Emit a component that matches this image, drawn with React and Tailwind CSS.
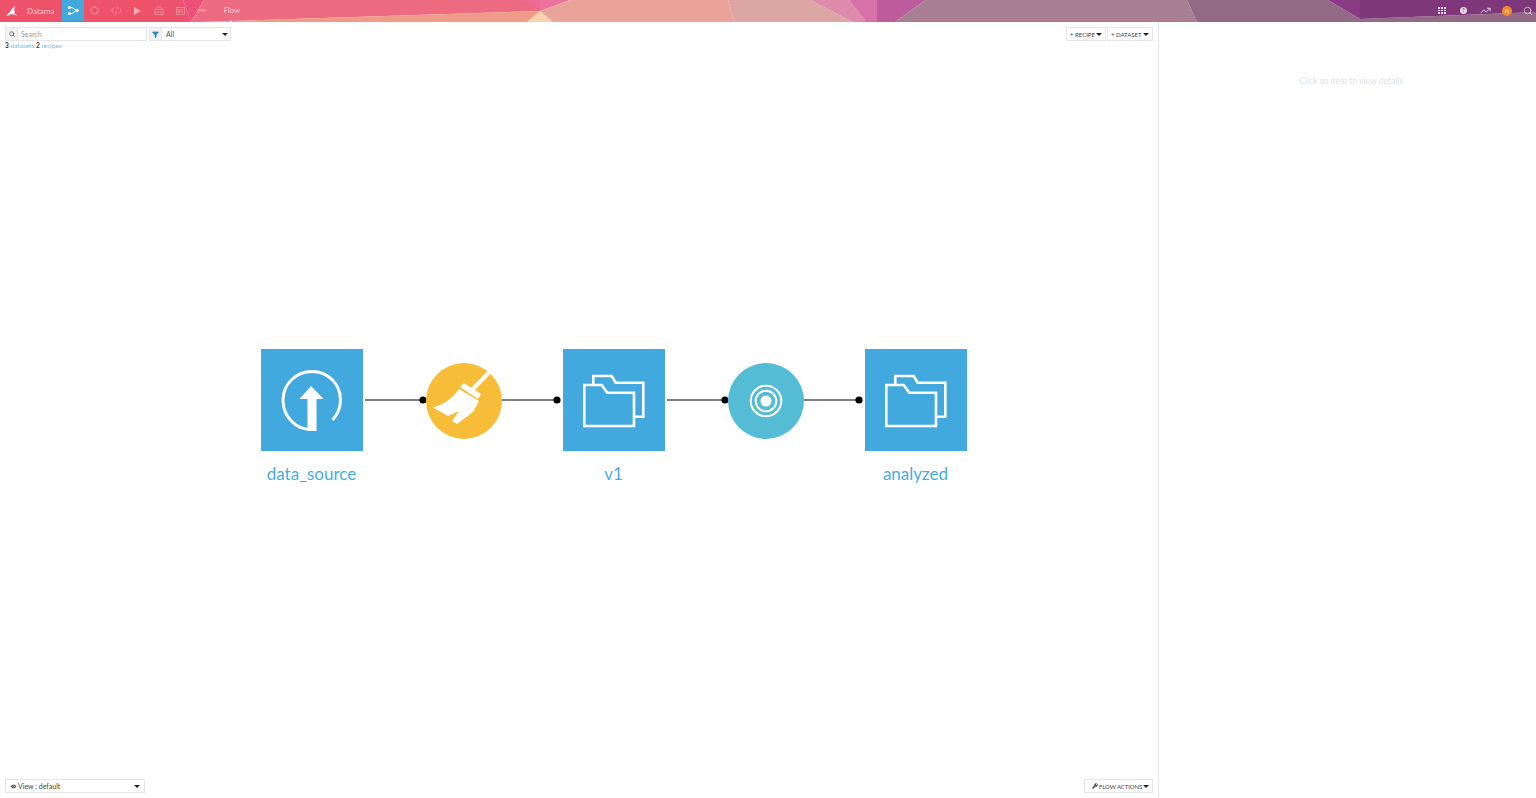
import React from "react";
import { Eye, Filter, Search, TrendingUp, Wrench } from "lucide-react";

const banner = [
  ["#ee516a", "0,0 183,0 191,22 0,22"],
  ["#ee4f78", "183,0 204,0 191,22"],
  ["#ed6b80", "204,0 540,0 540,11 200,22 191,22"],
  ["#f09b88", "200,22 540,11 527,22"],
  ["#ec6a94", "517,0 540,0 540,8"],
  ["#ec719c", "540,0 570,0 540,11"],
  ["#f8d3b0", "527,22 540,11 553,22"],
  ["#e9a398", "570,0 728,0 735,22 553,22 540,11"],
  ["#daa5a2", "728,0 810,0 853,22 735,22"],
  ["#de8bab", "810,0 849,0 866,22 853,22"],
  ["#d672a8", "849,0 877,0 877,22 866,22"],
  ["#bc5c9c", "877,0 926,0 895,22 877,22"],
  ["#a87e92", "926,0 1187,0 1197,22 895,22"],
  ["#926a85", "1187,0 1328,0 1360,19 1536,12 1536,22 1197,22"],
  ["#8a3a82", "1328,0 1360,0 1360,19"],
  ["#7e3778", "1360,0 1536,0 1536,12 1360,19"],
];

function Caret() {
  return <span className="inline-block shrink-0 border-x-[3px] border-t-[3px] border-x-transparent border-t-[#222]" />;
}

function FlowGlyph() {
  return (
    <svg width="11" height="9" viewBox="0 0 11 9">
      <path d="M2 1.5H4L8 4.5L4 7.5H2" fill="none" stroke="white" strokeWidth="1" />
      <circle cx="1.5" cy="1.5" r="1.5" fill="white" />
      <circle cx="1.5" cy="7.5" r="1.5" fill="white" />
      <circle cx="9" cy="4.5" r="1.8" fill="white" />
    </svg>
  );
}

function HeaderIcon({ children }) {
  return <div className="flex h-full w-[21.4px] items-center justify-center opacity-35">{children}</div>;
}

function Folder() {
  return (
    <svg width="102" height="102" viewBox="0 0 102 102" fill="none" stroke="white" strokeWidth="2.6">
      <path d="M21.3 36H38.7L44.3 43.7H71V77H21.3Z" />
      <path d="M30.3 35V27H48.7L52.7 33.7H80.3V67.7H71" />
    </svg>
  );
}

function Upload() {
  return (
    <svg width="102" height="102" viewBox="0 0 102 102" fill="none">
      <path d="M50 80.4C34 80.4 22 67 22 51C22 35 35 22.5 51 22.5C67 22.5 79.5 35 79.5 51C79.5 60 76 66 71.5 71" stroke="white" strokeWidth="3" />
      <path d="M50 37L62.5 50H55.5V82H46.5V50H38.5Z" fill="white" />
    </svg>
  );
}

function Broom() {
  return (
    <svg width="76" height="76" viewBox="0 0 76 76" fill="none">
      <path d="M63 9.5L46 27" stroke="white" strokeWidth="4" />
      <path d="M34 24L38 20L55 31L52 36Z" fill="white" />
      <path d="M33 26L53 38L47 49L31 61L26 58L33 48L22 53L7 44.5C17 42 27 35 33 26Z" fill="white" />
    </svg>
  );
}

function Target() {
  return (
    <svg width="76" height="76" viewBox="0 0 76 76" fill="none" stroke="white" strokeWidth="2">
      <circle cx="38" cy="38" r="15.3" />
      <circle cx="38" cy="38" r="10.3" />
      <circle cx="38" cy="38" r="5.5" fill="white" stroke="none" />
    </svg>
  );
}

const datasets = [
  { left: 260.5, name: "data_source", icon: <Upload /> },
  { left: 562.5, name: "v1", icon: <Folder /> },
  { left: 864.5, name: "analyzed", icon: <Folder /> },
];

function FlowGraph() {
  return (
    <div className="absolute inset-0">
      <svg className="absolute inset-0" width="1158" height="776" viewBox="0 0 1158 776">
        {[[365, 423], [502, 557], [667, 725], [804, 859]].map(([a, b]) => (
          <g key={a}>
            <line x1={a} x2={b} y1="378" y2="378" stroke="#555" strokeWidth="1.6" />
            <circle cx={b} cy="378" r="3.6" fill="black" />
          </g>
        ))}
      </svg>
      {datasets.map((d) => (
        <div key={d.name} className="absolute top-[327px] flex w-[102px] flex-col items-center" style={{ left: d.left }}>
          <div className="h-[102px] w-[102px] bg-[#42a9df]">{d.icon}</div>
          <div className="mt-[12px] whitespace-nowrap text-[17px] leading-[22px] text-[#48ade2]">{d.name}</div>
        </div>
      ))}
      <div className="absolute left-[426px] top-[341px] h-[76px] w-[76px] rounded-full bg-[#f7bc38]"><Broom /></div>
      <div className="absolute left-[728px] top-[341px] h-[76px] w-[76px] rounded-full bg-[#55bcd6]"><Target /></div>
    </div>
  );
}

function Button({ children, className }) {
  return (
    <div className={`flex h-[14px] items-center justify-between whitespace-nowrap border border-[#e6e6e6] bg-white px-[3px] text-[6px] text-[#444] ${className}`}>
      {children}
    </div>
  );
}

export default function App() {
  return (
    <div className="flex h-[798px] flex-col overflow-hidden bg-white font-['Lato',sans-serif]">
      <header className="relative flex h-[22px] shrink-0 items-center border-b border-[#f3e6ea] text-white">
        <svg className="absolute inset-0" width="1536" height="22" viewBox="0 0 1536 22" preserveAspectRatio="none">
          {banner.map(([fill, points]) => <polygon key={points} fill={fill} points={points} />)}
        </svg>
        <div className="relative flex h-full w-full items-center">
          <svg className="ml-[6px]" width="12" height="10" viewBox="0 0 12 10">
            <path d="M0 10C3 8 5 3 9 0C8 3 8 5 9 6L8 7C9 8 10 9 12 10C9 9 7 8 5 8C4 9 2 9.5 0 10Z" fill="white" />
          </svg>
          <div className="ml-[9px] w-[35px] text-[8px] text-[#f7c1cb]">Datama</div>
          <div className="flex h-[21px] w-[22px] items-center justify-center bg-[#42a9df]"><FlowGlyph /></div>
          <div className="flex h-full items-center">
            <HeaderIcon>
              <svg width="9" height="9" viewBox="0 0 9 9"><circle cx="4.5" cy="4.5" r="3.5" fill="none" stroke="white" strokeWidth="1.3" strokeDasharray="4 .6" /></svg>
            </HeaderIcon>
            <HeaderIcon>
              <svg width="11" height="9" viewBox="0 0 11 9" fill="none" stroke="white" strokeWidth=".9"><path d="M3 1.5L.7 4.5L3 7.5M8 1.5L10.3 4.5L8 7.5M6.5 .5L4.5 8.5" /></svg>
            </HeaderIcon>
            <div className="flex h-full w-[21.4px] items-center justify-center opacity-50">
              <svg width="7" height="8" viewBox="0 0 7 8"><path d="M0 0L7 4L0 8Z" fill="white" /></svg>
            </div>
            <HeaderIcon>
              <svg width="10" height="9" viewBox="0 0 10 9" fill="none" stroke="white" strokeWidth=".9"><path d="M3 3V1H7V3M.5 3.5H9.5V6H.5ZM1 6V8.5H9V6" /></svg>
            </HeaderIcon>
            <HeaderIcon>
              <svg width="9" height="8" viewBox="0 0 9 8" fill="none" stroke="white" strokeWidth=".9"><path d="M.5 .5H8.5V7.5H.5ZM2 2.5H4V5.5H2ZM5.5 2.5H7M5.5 4H7M5.5 5.5H7" /></svg>
            </HeaderIcon>
            <HeaderIcon>
              <span className="text-[5px] font-bold leading-none">•••</span>
            </HeaderIcon>
          </div>
          <div className="relative ml-[11.5px] text-[7.5px] text-[#fbd2d9]">
            Flow
            <span className="absolute -bottom-[7px] left-[5px] border-x-[2.5px] border-b-[3px] border-x-transparent border-b-white" />
          </div>
          <div className="ml-auto flex items-center">
            <div className="grid h-[7px] w-[8px] grid-cols-3 gap-[1px]">
              {[0, 1, 2, 3, 4, 5, 6, 7, 8].map((i) => <span key={i} className="bg-[#e8dbe8]" />)}
            </div>
            <div className="ml-[14px] flex h-[7px] w-[7px] items-center justify-center rounded-full bg-[#e2d6e2] text-[5px] font-bold text-[#7e3778]">?</div>
            <TrendingUp className="ml-[13px] text-[#e6dde6]" size={11} strokeWidth={2} />
            <div className="ml-[11px] flex h-[10px] w-[10px] items-center justify-center rounded-full bg-[#f28a2d] text-[6.5px] text-[#fde6d0]">A</div>
            <Search className="ml-[11px] mr-[3px] text-[#e2d6e2]" size={10} strokeWidth={1.8} />
          </div>
        </div>
      </header>

      <div className="flex min-h-0 flex-1">
        <main className="relative flex w-[1159px] shrink-0 flex-col justify-between border-r border-[#e6e6e6] pb-[5px]">
          <FlowGraph />
          <div className="relative">
            <div className="flex items-start justify-between pl-[5px] pr-[5px] pt-[5px]">
              <div className="flex h-[14px] items-stretch">
                <div className="flex w-[13px] items-center justify-center border border-[#e6e6e6] bg-[#f2f2f2]">
                  <Search size={6} className="text-[#555]" strokeWidth={3} />
                </div>
                <div className="flex w-[129px] items-center border border-l-0 border-[#e6e6e6] pl-[3px] text-[7px] text-[#9a9a9a]">Search</div>
                <div className="ml-[2px] flex w-[13px] items-center justify-center border border-[#e6e6e6] bg-[#f2f2f2]">
                  <Filter size={7} className="fill-[#2c85c4] text-[#2c85c4]" />
                </div>
                <div className="flex w-[69px] items-center justify-between border border-l-0 border-[#e6e6e6] pl-[4px] pr-[2px] text-[7px] text-[#555]">
                  All<Caret />
                </div>
              </div>
              <div className="flex gap-[1px]">
                <Button className="w-[40px]"><span>+ RECIPE</span><Caret /></Button>
                <Button className="w-[46px]"><span>+ DATASET</span><Caret /></Button>
              </div>
            </div>
            <div className="pl-[5px] text-[6.5px] leading-[10px] text-[#7fb9dd]">
              <b className="text-[#333]">3</b> datasets <b className="text-[#333]">2</b> recipes
            </div>
          </div>
          <div className="relative flex items-center justify-between px-[5px]">
            <div className="flex h-[14px] w-[140px] items-center justify-between border border-[#e6e6e6] px-[4px] text-[7px] text-[#444]">
              <span className="flex items-center gap-[1px]"><Eye size={7} fill="#555" stroke="white" strokeWidth={1} />View : default</span>
              <Caret />
            </div>
            <Button className="w-[69px]">
              <span className="ml-[4px] flex items-center gap-[1px] tracking-[-0.1px]"><Wrench size={6} fill="#444" />FLOW ACTIONS</span>
              <Caret />
            </Button>
          </div>
        </main>
        <aside className="flex-1 pl-[7px] pt-[53px] text-center text-[8.5px] leading-[12px] text-[#dfe1e6]">
          Click an item to view details
        </aside>
      </div>
    </div>
  );
}
